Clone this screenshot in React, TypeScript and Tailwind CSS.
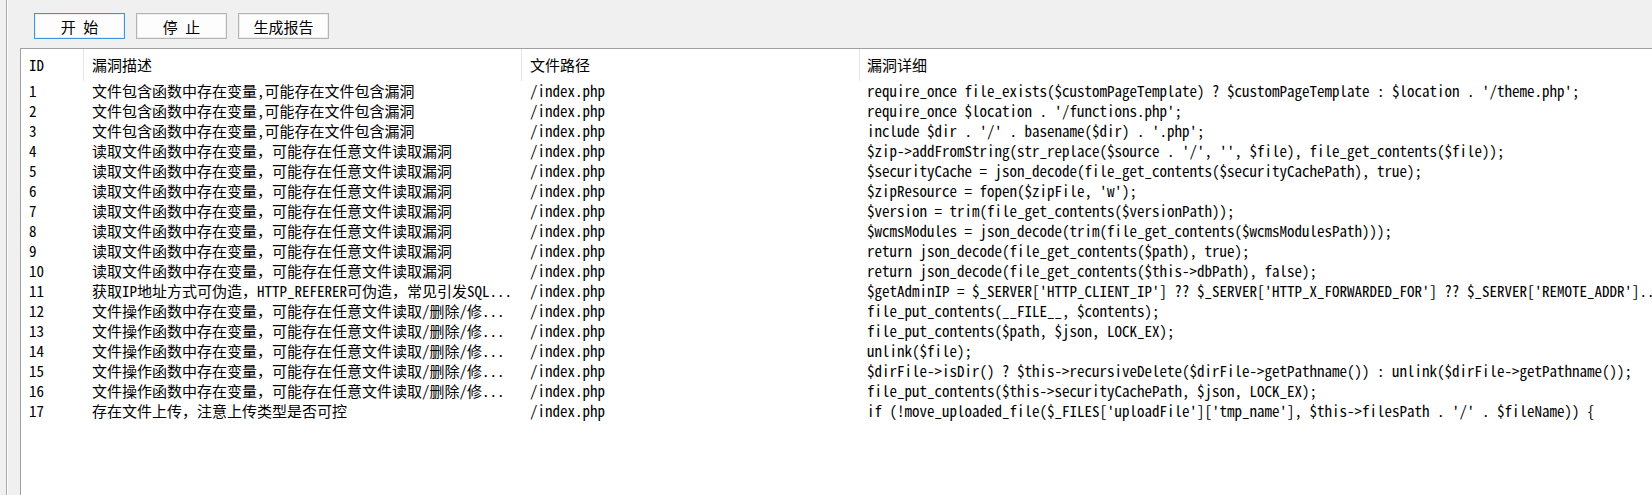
import React from 'react';

type Row = {
  id: number;
  desc: string;
  path: string;
  detail: string;
};

const INCLUDE = '文件包含函数中存在变量,可能存在文件包含漏洞';
const READ = '读取文件函数中存在变量，可能存在任意文件读取漏洞';
const FILEOP = '文件操作函数中存在变量，可能存在任意文件读取/删除/修...';

const rows: Row[] = [
  { id: 1, desc: INCLUDE, path: '/index.php', detail: "require_once file_exists($customPageTemplate) ? $customPageTemplate : $location . '/theme.php';" },
  { id: 2, desc: INCLUDE, path: '/index.php', detail: "require_once $location . '/functions.php';" },
  { id: 3, desc: INCLUDE, path: '/index.php', detail: "include $dir . '/' . basename($dir) . '.php';" },
  { id: 4, desc: READ, path: '/index.php', detail: "$zip->addFromString(str_replace($source . '/', '', $file), file_get_contents($file));" },
  { id: 5, desc: READ, path: '/index.php', detail: '$securityCache = json_decode(file_get_contents($securityCachePath), true);' },
  { id: 6, desc: READ, path: '/index.php', detail: "$zipResource = fopen($zipFile, 'w');" },
  { id: 7, desc: READ, path: '/index.php', detail: '$version = trim(file_get_contents($versionPath));' },
  { id: 8, desc: READ, path: '/index.php', detail: '$wcmsModules = json_decode(trim(file_get_contents($wcmsModulesPath)));' },
  { id: 9, desc: READ, path: '/index.php', detail: 'return json_decode(file_get_contents($path), true);' },
  { id: 10, desc: READ, path: '/index.php', detail: 'return json_decode(file_get_contents($this->dbPath), false);' },
  {
    id: 11,
    desc: '获取IP地址方式可伪造，HTTP_REFERER可伪造，常见引发SQL...',
    path: '/index.php',
    detail: "$getAdminIP = $_SERVER['HTTP_CLIENT_IP'] ?? $_SERVER['HTTP_X_FORWARDED_FOR'] ?? $_SERVER['REMOTE_ADDR']..",
  },
  { id: 12, desc: FILEOP, path: '/index.php', detail: 'file_put_contents(__FILE__, $contents);' },
  { id: 13, desc: FILEOP, path: '/index.php', detail: 'file_put_contents($path, $json, LOCK_EX);' },
  { id: 14, desc: FILEOP, path: '/index.php', detail: 'unlink($file);' },
  { id: 15, desc: FILEOP, path: '/index.php', detail: '$dirFile->isDir() ? $this->recursiveDelete($dirFile->getPathname()) : unlink($dirFile->getPathname());' },
  { id: 16, desc: FILEOP, path: '/index.php', detail: 'file_put_contents($this->securityCachePath, $json, LOCK_EX);' },
  { id: 17, desc: '存在文件上传，注意上传类型是否可控', path: '/index.php', detail: "if (!move_uploaded_file($_FILES['uploadFile']['tmp_name'], $this->filesPath . '/' . $fileName)) {" },
];

const font = 'font-["Noto_Sans_Mono_CJK_SC","Noto_Sans_CJK_SC",monospace]';

function Button({ label, focused }: { label: string; focused?: boolean }) {
  return (
    <button
      className={`h-[26px] w-[91px] border text-[15px] leading-none text-black whitespace-pre bg-[#fdfdfd] shadow-[inset_0_0_0_1px_#ececec] ${
        focused ? 'border-[#3d95e0]' : 'border-[#b4b4b4]'
      }`}
    >
      {label}
    </button>
  );
}

export default function App() {
  return (
    <div className={`w-[1652px] h-[495px] overflow-hidden bg-[#f0f0f0] flex ${font}`}>
      {/* Left splitter strip */}
      <div className="w-[20px] shrink-0 flex">
        <div className="ml-[6px] w-px h-full bg-[#a9a9a9]" />
        <div className="w-px h-full bg-white" />
      </div>

      <div className="flex-1 flex flex-col min-w-0">
        {/* Toolbar */}
        <div className="h-[48px] shrink-0 flex items-start gap-[11px] pt-[13px] pl-[14px]">
          <Button label="开 始" focused />
          <Button label="停 止" />
          <Button label="生成报告" />
        </div>

        {/* Result list */}
        <div className="flex-1 bg-white border-t border-l border-[#a0a0a0] overflow-hidden text-[15px] text-black">
          <div className="grid grid-cols-[63px_438px_338px_1fr] h-[32px] items-center">
            <div className="h-full flex items-center pl-[8px] border-r border-[#e5e5e5]">ID</div>
            <div className="h-full flex items-center pl-[8px] border-r border-[#e5e5e5]">漏洞描述</div>
            <div className="h-full flex items-center pl-[8px] border-r border-[#e5e5e5]">文件路径</div>
            <div className="h-full flex items-center pl-[7px]">漏洞详细</div>
          </div>
          {rows.map((r) => (
            <div key={r.id} className="grid grid-cols-[63px_438px_338px_1fr] h-[20px] items-center leading-[20px]">
              <div className="pl-[8px] whitespace-nowrap">{r.id}</div>
              <div className="pl-[8px] whitespace-nowrap overflow-hidden">{r.desc}</div>
              <div className="pl-[8px] whitespace-nowrap">{r.path}</div>
              <div className="pl-[7px] whitespace-nowrap overflow-hidden">{r.detail}</div>
            </div>
          ))}
        </div>
      </div>
    </div>
  );
}
